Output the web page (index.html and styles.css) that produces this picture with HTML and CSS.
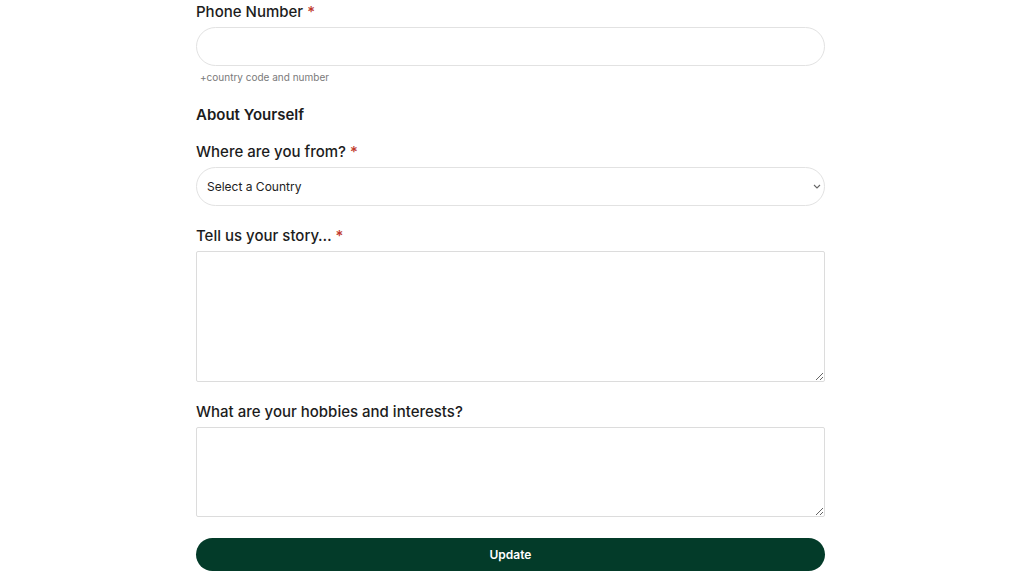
FILE: index.html
```html
<!DOCTYPE html>
<html lang="en">
<head>
    <meta charset="UTF-8">
    <meta name="viewport" content="width=device-width, initial-scale=1.0">
    <title>Profile</title>
    <link rel="stylesheet" href="styles.css">
</head>
<body>
    <form class="profile-form">
        <div class="field">
            <label class="label" for="phone">Phone Number <span class="req">*</span></label>
            <input type="text" id="phone" class="input">
            <p class="hint">+country code and number</p>
        </div>

        <h3 class="section-title">About Yourself</h3>

        <div class="field">
            <label class="label" for="country">Where are you from? <span class="req">*</span></label>
            <div class="select-wrap">
                <select id="country" class="input select">
                    <option>Select a Country</option>
                </select>
                <svg class="chevron" width="8" height="5" viewBox="0 0 8 5"><path d="M1 1l3 3 3-3" fill="none" stroke="#666" stroke-width="1.1"/></svg>
            </div>
        </div>

        <div class="field">
            <label class="label" for="story">Tell us your story… <span class="req">*</span></label>
            <textarea id="story" class="textarea story"></textarea>
        </div>

        <div class="field">
            <label class="label" for="hobbies">What are your hobbies and interests?</label>
            <textarea id="hobbies" class="textarea hobbies"></textarea>
        </div>

        <button type="button" class="submit">Update</button>
    </form>
</body>
</html>
```

FILE: styles.css
```css
body {
    margin: 0;
    padding-right: 3px;
    background-color: #fff;
    font-family: 'Inter', 'Noto Sans', sans-serif;
    color: #1c1c1c;
}
.profile-form {
    width: 629px;
    margin: 0 auto;
    display: flex;
    flex-direction: column;
}
.field {
    display: flex;
    flex-direction: column;
}
.label {
    font-size: 15px;
    font-weight: 500;
    line-height: 20px;
    margin-top: 2px;
    margin-bottom: 5px;
}
.req {
    color: #c0392b;
}
.input {
    box-sizing: border-box;
    height: 39px;
    width: 100%;
    border: 1px solid #e2e2e2;
    border-radius: 20px;
    background: #fff;
    font-family: inherit;
    font-size: 12px;
    color: #222;
    padding: 0 10px;
    outline: none;
}
.hint {
    margin: 5px 0 0 4px;
    font-size: 10px;
    color: #7a7a7a;
    line-height: 12px;
}
.section-title {
    margin: 22px 0 15px;
    font-size: 15px;
    font-weight: 600;
    line-height: 20px;
}
.select-wrap {
    position: relative;
}
.select {
    appearance: none;
    -webkit-appearance: none;
}
.chevron {
    position: absolute;
    right: 4px;
    top: 17px;
}
.textarea {
    box-sizing: border-box;
    width: 100%;
    border: 1px solid #dcdcdc;
    border-radius: 2px;
    font-family: inherit;
    resize: vertical;
    outline: none;
}
.story {
    height: 131px;
}
.hobbies {
    height: 90px;
}
.field + .field {
    margin-top: 18px;
}
.submit {
    margin-top: 21px;
    height: 33px;
    border: none;
    border-radius: 17px;
    background-color: #033b29;
    color: #fff;
    font-family: inherit;
    font-size: 12px;
    font-weight: 600;
    cursor: pointer;
}
```
